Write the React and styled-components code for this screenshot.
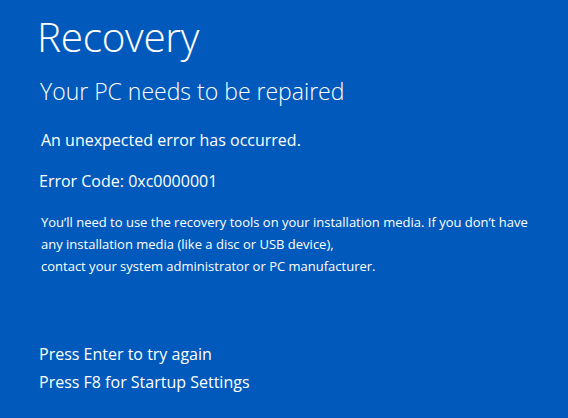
import React from "react";
import styled, { createGlobalStyle } from "styled-components";

const Global = createGlobalStyle`
  html, body { margin: 0; padding: 0; background: #015abb; }
  body { font-family: "Open Sans", "Noto Sans", sans-serif; color: #fff; }
`;

const Screen = styled.div`
  width: 568px;
  height: 418px;
  box-sizing: border-box;
  background: #015abb;
  padding: 9px 0 0 37px;
  display: flex;
  flex-direction: column;
  overflow: hidden;
`;

const Title = styled.h1`
  margin: 0;
  font-weight: 300;
  font-size: 40.5px;
  line-height: 56px;
  letter-spacing: -0.3px;
`;

const Subtitle = styled.h2`
  margin: 11px 0 0 3px;
  font-weight: 300;
  font-size: 23px;
  line-height: 30px;
`;

const Line = styled.p`
  margin: ${(p) => p.$top || 0}px 0 0 ${(p) => p.$left ?? 4}px;
  font-weight: 400;
  font-size: ${(p) => p.$size || 16}px;
  line-height: ${(p) => p.$lh || 24}px;
`;

const Paragraph = styled.p`
  margin: 18px 0 0 4px;
  font-size: 13px;
  line-height: 22px;
`;

const Actions = styled.div`
  margin: 63px 0 0 2px;
  display: flex;
  flex-direction: column;
`;

const Action = styled.div`
  font-size: 16px;
  line-height: 28px;
`;

export default function App() {
  return (
    <>
      <Global />
      <Screen>
        <Title>Recovery</Title>
        <Subtitle>Your PC needs to be repaired</Subtitle>
        <Line $top={22} $size={16}>An unexpected error has occurred.</Line>
        <Line $top={17} $left={2} $size={16}>Error Code: 0xc0000001</Line>
        <Paragraph>
          You’ll need to use the recovery tools on your installation media. If you don’t have
          <br />
          any installation media (like a disc or USB device),
          <br />
          contact your system administrator or PC manufacturer.
        </Paragraph>
        <Actions>
          <Action>Press Enter to try again</Action>
          <Action>Press F8 for Startup Settings</Action>
        </Actions>
      </Screen>
    </>
  );
}
